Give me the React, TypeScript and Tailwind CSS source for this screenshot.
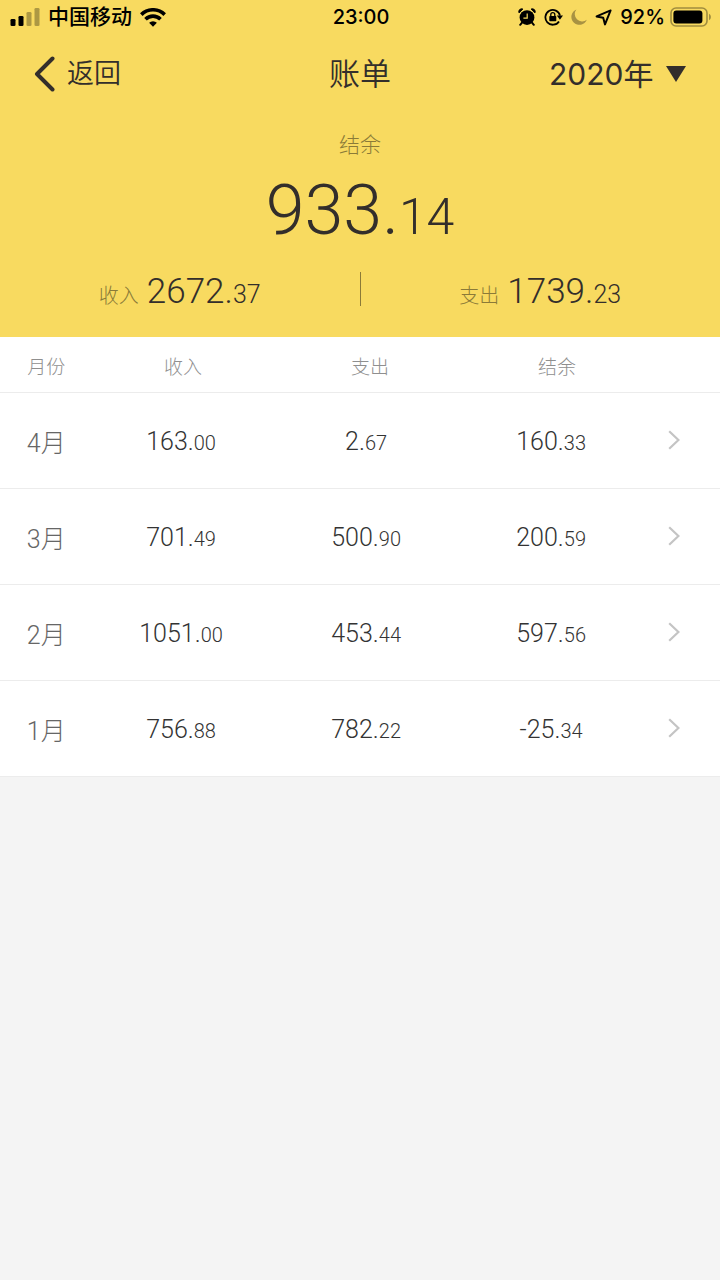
import type { ReactNode } from 'react';

interface MonthBill {
  month: number;
  income: string;
  expense: string;
  balance: string;
}

const BILLS: MonthBill[] = [
  { month: 4, income: '163.00', expense: '2.67', balance: '160.33' },
  { month: 3, income: '701.49', expense: '500.90', balance: '200.59' },
  { month: 2, income: '1051.00', expense: '453.44', balance: '597.56' },
  { month: 1, income: '756.88', expense: '782.22', balance: '-25.34' },
];

const YEARS = [2020, 2019, 2018];

// integer part keeps the parent size, decimals are drawn smaller
const Amount = ({ value, decimalClass }: { value: string; decimalClass: string }) => {
  const [whole, decimals] = value.split('.');
  return (
    <>
      {whole}.<span className={`leading-none ${decimalClass}`}>{decimals}</span>
    </>
  );
};

const SignalIcon = () => (
  <svg width="30" height="18" viewBox="0 0 30 18" aria-hidden="true">
    <rect x="0.5" y="11" width="5" height="7" rx="1.3" />
    <rect x="8.5" y="8" width="5" height="10" rx="1.3" />
    <rect x="16.5" y="4" width="5" height="14" rx="1.3" opacity="0.3" />
    <rect x="24.5" y="0" width="5" height="18" rx="1.3" opacity="0.3" />
  </svg>
);

const WifiIcon = () => (
  <svg width="26" height="19" viewBox="0 0 26 19" fill="none" stroke="#000" strokeWidth="3.6" aria-hidden="true">
    <path d="M1.3 6.6a16.6 16.6 0 0 1 23.4 0" />
    <path d="M5.5 11.2a10.6 10.6 0 0 1 15 0" />
    <path d="M13 18.8l-3.9-4a5.5 5.5 0 0 1 7.8 0z" fill="#000" stroke="none" />
  </svg>
);

const AlarmIcon = () => (
  <svg width="18" height="18" viewBox="0 0 18 18" aria-hidden="true">
    <circle cx="9" cy="9.6" r="7.4" />
    <path d="M1 5A3 3 0 0 1 5 1zM17 5A3 3 0 0 0 13 1z" stroke="#000" strokeWidth="0.8" strokeLinejoin="round" />
    <path d="M4 14.6l-1.8 2.2M14 14.6l1.8 2.2" stroke="#000" strokeWidth="2" strokeLinecap="round" />
    <path d="M9.2 5.6v4.6H5.4" fill="none" stroke="#f8da60" strokeWidth="1.2" />
  </svg>
);

const RotationLockIcon = () => (
  <svg width="19" height="18" viewBox="0 0 19 18" aria-hidden="true">
    <path d="M15 13.4A7.4 7.4 0 1 1 16 7.6" fill="none" stroke="#000" strokeWidth="1.8" />
    <path d="M12.8 7.6h6.2l-3.1 4.2z" />
    <rect x="5.3" y="8" width="7" height="5.2" rx="0.8" />
    <path d="M6.8 8.6V6.6a2 2 0 0 1 4 0v2" fill="none" stroke="#000" strokeWidth="1.3" />
  </svg>
);

const MoonIcon = () => (
  <svg width="16" height="16" viewBox="0 0 16 16" aria-hidden="true">
    <path d="M5.4.4A8 8 0 1 0 15.8 10.8 7.4 7.4 0 0 1 5.4.4z" fill="#a89242" />
  </svg>
);

const LocationIcon = () => (
  <svg width="17" height="17" viewBox="0 0 17 17" aria-hidden="true">
    <path d="M15.6 1.4L1.6 7.4l6.6 1.4 1.8 6.6z" fill="none" stroke="#000" strokeWidth="2" strokeLinejoin="round" />
  </svg>
);

const BatteryIcon = () => (
  <svg width="42" height="20" viewBox="0 0 42 20" aria-hidden="true">
    <rect x="1" y="1" width="36" height="18" rx="5" fill="none" stroke="#a08d3e" strokeWidth="1.6" />
    <rect x="3.4" y="3.4" width="29" height="13.2" rx="3" />
    <path d="M39 6.8a3.6 3.6 0 0 1 0 6.4z" fill="#a08d3e" />
  </svg>
);

const StatusBar = () => (
  <div className="grid h-[34px] grid-cols-[1fr_auto_1fr] items-center pr-2 pl-[10px] text-[20px] leading-[34px] font-medium text-black">
    <div className="flex items-center gap-2">
      <SignalIcon />
      <span className="text-[21px]">中国移动</span>
      <WifiIcon />
    </div>
    <time>23:00</time>
    <div className="flex items-center justify-end gap-[5px]">
      <div className="flex items-center gap-2">
        <AlarmIcon />
        <RotationLockIcon />
        <MoonIcon />
        <LocationIcon />
        <span>92%</span>
      </div>
      <BatteryIcon />
    </div>
  </div>
);

const NavBar = () => (
  <nav className="grid h-20 grid-cols-[1fr_auto_1fr] items-center px-[34px] font-[350]">
    <button type="button" className="flex items-center gap-3 text-[27px]">
      <svg width="21" height="36" viewBox="0 0 21 36" fill="none" stroke="currentColor" strokeWidth="4" strokeLinecap="round" strokeLinejoin="round" aria-hidden="true">
        <path d="M18.5 2.5L3 18l15.5 15.5" />
      </svg>
      返回
    </button>
    <h1 className="text-[31px]">账单</h1>
    <div className="relative justify-self-end">
      <select aria-label="年份" className="appearance-none bg-transparent pr-8 text-[30px] font-normal outline-none">
        {YEARS.map((year) => (
          <option key={year}>{year}年</option>
        ))}
      </select>
      <svg className="pointer-events-none absolute top-1/2 right-0 -translate-y-1/2" width="20" height="16" viewBox="0 0 20 16" fill="currentColor" aria-hidden="true">
        <path d="M0 0h20l-10 16z" />
      </svg>
    </div>
  </nav>
);

const Total = ({ label, value }: { label: string; value: string }) => (
  <div className="flex flex-1 items-baseline justify-center gap-2">
    <span className="text-[20px] text-[#8b7a38]">{label}</span>
    <span className="font-[Roboto] text-[35px]">
      <Amount value={value} decimalClass="text-[25px]" />
    </span>
  </div>
);

const Summary = () => (
  <section className="flex flex-col items-center pt-[15px] font-light">
    <p className="text-[21px] leading-8 text-[#8b7a38]">结余</p>
    <p className="mt-[7px] font-[Roboto] text-[70px] leading-[84px]">
      <Amount value="933.14" decimalClass="text-[50px]" />
    </p>
    <div className="mt-5 flex w-full items-start pb-[21px] leading-10">
      <Total label="收入" value="2672.37" />
      <div className="h-[34px] w-px bg-[#8b7a38]" />
      <Total label="支出" value="1739.23" />
    </div>
  </section>
);

const HeadCell = ({ className, children }: { className: string; children?: ReactNode }) => (
  <th scope="col" className={`h-[55px] pt-2 font-light ${className}`}>
    {children}
  </th>
);

const BillTable = () => (
  <table className="w-full table-fixed border-collapse bg-white text-center font-light">
    <colgroup>
      <col className="w-[12.3%]" />
      <col className="w-[25.7%]" />
      <col className="w-[25.7%]" />
      <col className="w-[25.7%]" />
      <col />
    </colgroup>
    <thead>
      <tr className="border-b border-[#ececec] text-[19px] text-[#8f8f8f]">
        <HeadCell className="pl-1">月份</HeadCell>
        <HeadCell className="pl-1">收入</HeadCell>
        <HeadCell className="pl-2">支出</HeadCell>
        <HeadCell className="pl-3">结余</HeadCell>
        <td />
      </tr>
    </thead>
    <tbody>
      {BILLS.map(({ month, income, expense, balance }) => (
        <tr key={month} className="h-24 border-b border-[#ececec] text-[25px] text-[#333]">
          <th scope="row" className="pt-2 pl-1 font-[Roboto,'Noto_Sans_CJK_SC',sans-serif] font-light text-[#666]">
            {month}月
          </th>
          {[income, expense, balance].map((value, i) => (
            <td key={i} className="pt-1 font-[Roboto]">
              <Amount value={value} decimalClass="text-[20px]" />
            </td>
          ))}
          <td>
            <button type="button" aria-label={`${month}月账单`} className="block pl-6">
              <svg width="12" height="20" viewBox="0 0 12 20" fill="none" stroke="#c4c4c4" strokeWidth="2.2" aria-hidden="true">
                <path d="M1.2 1.2L10.4 10l-9.2 8.8" />
              </svg>
            </button>
          </td>
        </tr>
      ))}
    </tbody>
  </table>
);

export default function App() {
  return (
    <div className="min-h-screen bg-[#f4f4f4] font-[Inter,'Noto_Sans_CJK_SC',sans-serif] text-[#332e2b]">
      <header className="bg-[#f8da60]">
        <StatusBar />
        <NavBar />
        <Summary />
      </header>
      <main>
        <BillTable />
      </main>
    </div>
  );
}
